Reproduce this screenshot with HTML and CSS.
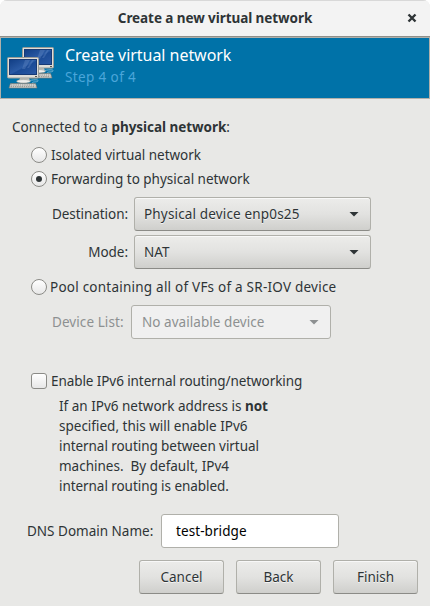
FILE: index.html
```
<!DOCTYPE html>
<html lang="en">
<head>
<meta charset="utf-8">
<title>Create a new virtual network</title>
<link rel="stylesheet" href="styles.css">
</head>
<body>
<div class="window">
  <header class="titlebar">
    <h1 class="title">Create a new virtual network</h1>
    <svg class="close" width="10" height="10" viewBox="0 0 10 10"><path d="M1.500 1.500l7 7M8.500 1.500l-7 7" stroke="#2e3436" stroke-width="2.400"/></svg>
  </header>
  <section class="banner">
    <svg class="computers" width="48" height="44" viewBox="0 0 48 44">
      <defs>
        <linearGradient id="screen" x1="0" y1="0" x2="1" y2="1"><stop offset="0" stop-color="#123f86"/><stop offset=".5" stop-color="#2b5ba5"/><stop offset=".55" stop-color="#1b4b96"/><stop offset="1" stop-color="#2a58a4"/></linearGradient>
        <g id="computer">
          <path d="M13 21h9l1 3h-11z" fill="#c9cbc6"/>
          <ellipse cx="16.500" cy="24.300" rx="7" ry="1.700" fill="#eeeeec" stroke="#888a85" stroke-width=".5"/>
          <path d="M23 23.500c4-1 9-1 8 .5s-6 .3-5.500 2 3 1.500 2 2.500" fill="none" stroke="#75b4d3" stroke-width="1"/>
          <rect x=".5" y=".5" width="31" height="20.500" rx="1" fill="#deded9" stroke="#999b96"/>
          <rect x="2" y="2" width="28" height="16" fill="#173a75"/>
          <rect x="3" y="3" width="26" height="14" fill="url(#screen)"/>
          <path d="M18 3h5l-5 9h-3zM25 3h2l-5 8h-2z" fill="#82a5d6" opacity=".25"/>
          <path d="M28 19.500h2" stroke="#555753"/>
          <path d="M3.500 26.500h25l1.500 4.500h-28z" fill="#dededb" stroke="#777974" stroke-width=".7"/>
          <path d="M4 28h24M3.500 29.700h25" stroke="#898b87" stroke-dasharray="1.500 .7"/>
        </g>
      </defs>
      <use href="#computer" x="15" y="0"/>
      <use href="#computer" x="0" y="10"/>
    </svg>
    <div class="headings">
      <h2 class="heading">Create virtual network</h2>
      <p class="step">Step 4 of 4</p>
    </div>
  </section>
  <main class="content">
    <p class="intro">Connected to a <b>physical network</b>:</p>
    <div class="option"><span class="radio"></span><span class="option-text">Isolated virtual network</span></div>
    <div class="option"><span class="radio checked"></span><span class="option-text">Forwarding to physical network</span></div>
    <div class="fields">
      <span class="label">Destination:</span><div class="combo"><span class="value">Physical device enp0s25</span><i class="arrow"></i></div>
      <span class="label mode">Mode:</span><div class="combo"><span>NAT</span><i class="arrow"></i></div>
    </div>
    <div class="option pool"><span class="radio"></span><span class="pool-text">Pool containing all of VFs of a SR-IOV device</span></div>
    <div class="device"><span class="device-label">Device List:</span><div class="combo disabled"><span>No available device</span><i class="arrow"></i></div></div>
    <div class="option ipv6"><span class="checkbox"></span><span class="ipv6-text">Enable IPv6 internal routing/networking</span></div>
    <p class="hint">If an IPv6 network address is <b>not</b><br>specified, this will enable IPv6<br><span class="tight">internal routing between virtual</span><br>machines.&nbsp; By default, IPv4<br><span class="tight">internal routing is enabled.</span></p>
    <div class="dns"><span class="dns-label">DNS Domain Name:</span><div class="entry">test-bridge</div></div>
    <footer class="actions"><div class="button">Cancel</div><div class="button">Back</div><div class="button">Finish</div></footer>
  </main>
</div>
</body>
</html>
```
FILE: styles.css
```
* { box-sizing: border-box; }
body { margin: 0; background: #fff; color: #2e3436; font: 13.5px/20px "Noto Sans", "Open Sans", sans-serif; white-space: nowrap; }
h1, h2, p { margin: 0; font-weight: inherit; }
b { letter-spacing: -.04px; }
svg { display: block; flex: none; }
.window { width: 430px; height: 606px; background: #e8e8e6; border-radius: 7px 7px 0 0; overflow: hidden; }
.titlebar { height: 37px; display: flex; align-items: center; justify-content: center; position: relative; background: #f3f3f3; border-top: 1px solid #d8d8d8; border-bottom: 1px solid #8f8f8a; }
.title { font-size: 13.5px; font-weight: 700; letter-spacing: -.07px; margin-top: -2px; }
.close { position: absolute; right: 13px; top: 12px; }
.banner { height: 62px; display: flex; background: #0072a8; border: 1px solid #b0b0aa; padding: 9px 0 0 6px; }
.headings { margin: -2px 0 0 10px; }
.heading { color: #fff; font-size: 16px; line-height: 20px; letter-spacing: -.04px; }
.step { color: #4ba6da; line-height: 20px; margin-top: 2px; letter-spacing: .38px; }
.content { padding: 18px 12px 12px; }
.intro { margin-bottom: 6px; }
.option { height: 24px; display: flex; align-items: center; gap: 4px; padding-left: 19px; }
.option-text { letter-spacing: -.03px; }
.radio, .checkbox { width: 16px; height: 16px; flex: none; border: 1px solid #8b8b87; background: linear-gradient(#fff, #e7e7e7); display: flex; align-items: center; justify-content: center; }
.radio { border-radius: 50%; }
.checkbox { border-radius: 3px; }
.checked::after { content: ""; width: 6px; height: 6px; border-radius: 50%; background: #2e3436; }
.fields { display: grid; grid-template-columns: 76px 237px; column-gap: 6px; row-gap: 4px; align-items: center; margin: 6px 0 6px 40px; }
.label { justify-self: end; letter-spacing: -.05px; }
.value { letter-spacing: .16px; }
.combo, .button { height: 34px; border: 1px solid #b0b0aa; border-bottom-color: #8b8b87; border-radius: 3px; background: linear-gradient(#ececea, #e2e2e0 50%, #cfcfcc); box-shadow: inset 0 1px #f8f8f8; text-shadow: 0 1px #ffffffb0; display: flex; align-items: center; }
.combo { justify-content: space-between; padding: 0 11px 0 9px; }
.arrow { width: 10px; height: 5px; background: #2e3436; clip-path: polygon(0 0, 100% 0, 50% 100%); }
.pool { gap: 3px; }
.pool-text { letter-spacing: .23px; }
.device { display: flex; align-items: center; gap: 7px; margin: 6px 0 0 40px; color: #8d9091; }
.device-label { width: 72px; letter-spacing: .08px; }
.disabled { width: 200px; background: #f0f0f0; border-color: #b0b0aa; box-shadow: none; text-shadow: none; padding-left: 10px; letter-spacing: .05px; }
.disabled .arrow { background: #8d9091; }
.ipv6 { margin-top: 30px; }
.ipv6-text { letter-spacing: -.08px; }
.hint { margin: 3px 0 0 47px; }
.tight { letter-spacing: -.06px; }
.dns { display: flex; align-items: center; margin: 18px 0 12px 15px; }
.dns-label { width: 134px; }
.entry { width: 178px; height: 34px; border: 1px solid #b0b0aa; border-radius: 3px; background: #fff; color: #000; padding: 6px 14px; letter-spacing: .08px; }
.actions { display: flex; justify-content: flex-end; gap: 12px; }
.button { width: 85px; justify-content: center; }
```
